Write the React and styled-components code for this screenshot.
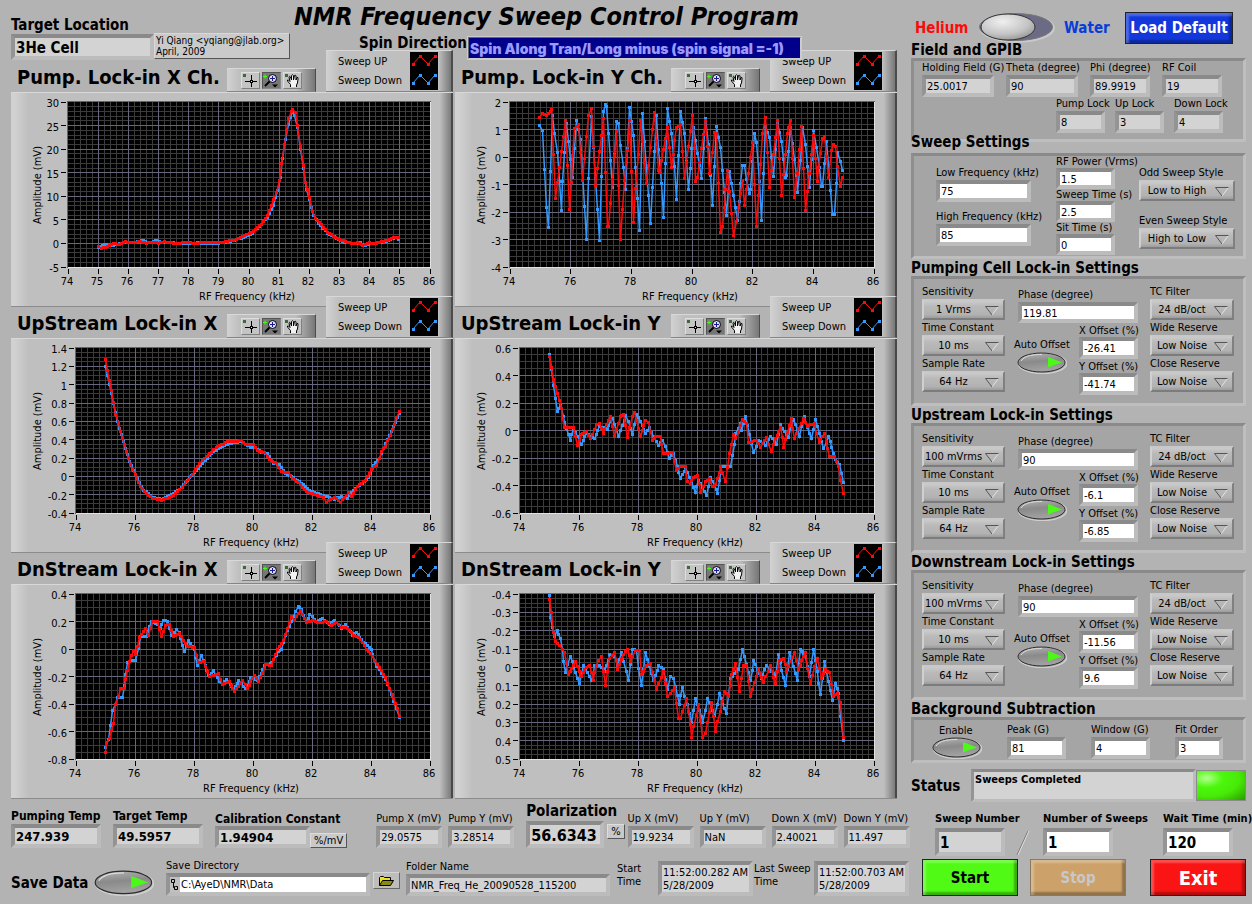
import { useId, useState } from "react";
import styled, { createGlobalStyle } from "styled-components";

const GlobalStyle = createGlobalStyle`
  * {
    box-sizing: border-box;
  }

  body {
    margin: 0;
    background: #b3b3b3;
    color: #000;
    font-family: "DejaVu Sans Condensed", "DejaVu Sans", sans-serif;
    font-size: 11px;
    line-height: 14px;
  }

  input,
  select,
  button,
  textarea {
    font: inherit;
    color: inherit;
    border-radius: 0;
    margin: 0;
  }
`;

// ========== PAGE ==========
const Page = styled.div`
  display: flex;
  min-height: 100vh;
  background: #b3b3b3;
  overflow: hidden;
`;

const Main = styled.main`
  flex: 1;
  min-width: 0;
  padding-left: 11px;
`;

const Sidebar = styled.aside`
  flex: 0 0 341px;
  padding-right: 6px;
`;

// ========== HEADER ==========
const Header = styled.header`
  position: relative;
  z-index: 2;
  display: flex;
  height: 61px;
`;

const Target = styled.div`
  width: 143px;
  padding-top: 16px;
`;

const Note = styled.div`
  align-self: flex-start;
  margin-top: 33px;
  width: 136px;
  height: 26px;
  padding: 1px;
  font-size: 10px;
  line-height: 11px;
  white-space: nowrap;
  background: #cacaca;
  border: 1px solid;
  border-color: #d8d8d8 #555 #555 #d8d8d8;
`;

const TitleBlock = styled.div`
  flex: 1;
  min-width: 0;
  padding-left: 4px;
`;

const Title = styled.h1`
  margin: 0;
  padding-top: 2px;
  font-size: 25px;
  line-height: 30px;
  font-weight: bold;
  font-style: italic;
  white-space: nowrap;
`;

const SpinRow = styled.div`
  display: flex;
  padding-left: 65px;
  margin-top: 4px;
`;

const SpinLabel = styled.label`
  width: 108px;
  font-size: 15px;
  line-height: 14px;
  font-weight: bold;
  white-space: nowrap;
`;

const SpinInput = styled.input`
  width: 335px;
  height: 24px;
  padding: 0 1px;
  font-family: Inter, "DejaVu Sans", sans-serif;
  font-size: 14px;
  font-weight: 900;
  color: #9a9aff;
  background: #00008a;
  border: 2px solid;
  border-color: #666 #ccc #ccc #666;
  outline: 1px solid #ccc;
  outline-offset: -1px;
`;

// ========== FIELDS ==========
const Text = styled.label`
  display: block;
  font-size: ${({ $size }) => $size || 11}px;
  line-height: ${({ $line }) => $line || 14}px;
  font-weight: ${({ $bold }) => ($bold ? "bold" : "normal")};
  white-space: nowrap;
`;

const Box = styled.input`
  display: block;
  width: 100%;
  height: ${({ $h }) => $h || 22}px;
  padding: 1px 1px 0;
  font-size: ${({ $size }) => $size || 11}px;
  font-weight: ${({ $bold }) => ($bold ? "bold" : "normal")};
  background: ${({ readOnly }) => (readOnly ? "#d3d3d3" : "#fff")};
  border: 4px solid;
  border-color: #8a8a8a #bcbcbc #bcbcbc #949494;
  outline: none;
`;

const FieldWrap = styled.div`
  width: ${({ $w }) => $w}px;
  flex: none;
`;

function Field({ label, value, w, h, size, labelSize, line, bold, indicator }) {
  const id = useId();
  return (
    <FieldWrap $w={w}>
      <Text htmlFor={id} $size={labelSize} $line={line} $bold={bold}>
        {label}
      </Text>
      <Box
        id={id}
        $h={h}
        $size={size}
        $bold={bold}
        defaultValue={value}
        readOnly={indicator}
      />
    </FieldWrap>
  );
}

const Unit = styled.span`
  flex: none;
  height: 15px;
  margin-bottom: ${({ $mb }) => $mb || 0}px;
  padding: 0 3px;
  font-size: 11px;
  line-height: 13px;
  background: #c9c9c9;
  border: 1px solid;
  border-color: #ddd #555 #555 #ddd;
`;

const RingWrap = styled.div`
  position: relative;
  width: ${({ $w }) => $w}px;

  svg {
    position: absolute;
    right: 6px;
    top: 7px;
    pointer-events: none;
  }
`;

const RingSelect = styled.select`
  display: block;
  appearance: none;
  width: 100%;
  height: 21px;
  padding: 0 20px 0 0;
  text-align: center;
  text-align-last: center;
  background: linear-gradient(180deg, #cbcbcb, #bababa 30%, #b2b2b2 80%, #9c9c9c);
  border: 2px solid;
  border-color: #c8c8c8 #808080 #7c7c7c #d0d0d0;
  outline: none;
`;

function Ring({ label, value, w }) {
  const id = useId();
  return (
    <div>
      <Text htmlFor={id} $line={15}>
        {label}
      </Text>
      <RingWrap $w={w}>
        <RingSelect id={id} defaultValue={value}>
          <option>{value}</option>
        </RingSelect>
        <svg width="14" height="10" viewBox="0 0 14 10" fill="none">
          <path d="M13.5 .5L7 9" stroke="#e4e4e4" />
          <path d="M13.5 .5H.5L7 9" stroke="#555" />
        </svg>
      </RingWrap>
    </div>
  );
}

// ========== LED BUTTON ==========
const LedButton = styled.button`
  display: block;
  flex: none;
  padding: 0;
  border: 0;
  background: none;
  cursor: pointer;

  svg {
    display: block;
  }
`;

function Led({ id, label, w = 50, h = 22 }) {
  const [on, setOn] = useState(true);
  const g = useId();
  return (
    <LedButton
      id={id}
      type="button"
      aria-label={label}
      aria-pressed={on}
      onClick={() => setOn(!on)}
    >
      <svg width={w} height={h} viewBox="0 0 50 22" preserveAspectRatio="none">
        <defs>
          <linearGradient id={g} x1="0" y1="0" x2="0.2" y2="1">
            <stop offset="0" stopColor="#b4b4b4" />
            <stop offset="0.5" stopColor="#8a8a8a" />
            <stop offset="1" stopColor="#a2a2a2" />
          </linearGradient>
        </defs>
        <ellipse cx="25.5" cy="11.5" rx="24" ry="10" fill="none" stroke="#cfcfcf" strokeWidth="1.5" />
        <ellipse cx="24.5" cy="10.5" rx="23.5" ry="9.5" fill={`url(#${g})`} stroke="#2c2c2c" />
        <path d="M4 9C8 3 18 2.500 25 2.500" fill="none" stroke="#dcdcdc" />
        <path d="M31 5Q37 7 45 10.500Q37 13 31 15.500Z" fill={on ? "#4cf818" : "#4a6a40"} />
      </svg>
    </LedButton>
  );
}

// ========== CHARTS ==========
const Charts = styled.section`
  display: grid;
  grid-template-columns: 1fr 1fr;
  column-gap: 2px;
  padding-right: 14px;
`;

const Card = styled.article`
  min-width: 0;
`;

const CardHead = styled.div`
  position: relative;
  display: flex;
  align-items: flex-end;
  height: 31px;
  padding-left: 6px;
`;

const CardTitle = styled.h2`
  flex: 0 0 210px;
  margin: 0;
  font-size: 20px;
  line-height: 29px;
  font-weight: bold;
  white-space: nowrap;
`;

const Palette = styled.div`
  display: flex;
  gap: 2px;
  width: 89px;
  height: 24px;
  padding: 3px 14px;
  background: linear-gradient(90deg, #d2d2d2, #bfbfbf 14%, #bdbdbd 78%, #777);
  border-top: 1px solid #d8d8d8;
  border-right: 1px solid #4c4c4c;
  border-bottom: 1px solid #858585;
`;

const PaletteButton = styled.button`
  width: 19px;
  height: 17px;
  padding: 0;
  background: ${({ $on }) => ($on ? "#777" : "#c4c4c4")};
  border: 1px solid;
  border-color: ${({ $on }) =>
    $on ? "#555 #888 #888 #555" : "#dedede #808080 #808080 #dedede"};

  svg {
    display: block;
  }
`;

const Legend = styled.ul`
  position: relative;
  display: flex;
  flex-direction: column;
  justify-content: center;
  width: 127px;
  height: 42px;
  margin: 0 0 0 auto;
  padding: 0 0 0 12px;
  list-style: none;
  background: linear-gradient(90deg, #d2d2d2, #bfbfbf 10%, #bfbfbf 90%, #777);
  border-top: 1px solid #d8d8d8;
  border-right: 2px solid #4c4c4c;
  border-bottom: 1px solid #858585;
`;

const LegendItem = styled.li`
  display: flex;
  align-items: center;
  justify-content: space-between;
  height: 19px;
  padding-right: 13px;

  svg {
    display: block;
    background: #000;
  }
`;

const Plot = styled.svg`
  display: block;
  width: 100%;
  height: auto;
  background: linear-gradient(90deg, #d2d2d2 0, #d0d0d0 1%, #bfbfbf 4%, #bfbfbf 97%, #6e6e6e);
  box-shadow: inset 0 1px #d8d8d8, inset 0 -1px #8c8c8c, inset -2px 0 #484848;

  text {
    font-size: 11px;
  }
`;

const RED = "#ff0a0a";
const BLUE = "#3399ff";

// fills the gaps between two readings at the instrument step
function sample(pts) {
  const out = [];
  for (let i = 0; i < pts.length - 2; i += 2) {
    const [x0, y0, x1, y1] = pts.slice(i, i + 4);
    const n = Math.max(1, Math.round((x1 - x0) / 0.067));
    for (let k = 0; k < n; k++) {
      out.push([x0 + ((x1 - x0) * k) / n, y0 + ((y1 - y0) * k) / n]);
    }
  }
  out.push([pts[pts.length - 2], pts[pts.length - 1]]);
  return out;
}

function Trace({ pts, color, sx, sy }) {
  const p = sample(pts).map(([x, y]) => [Math.floor(sx(x)), Math.floor(sy(y))]);
  return (
    <g>
      <polyline
        points={p.map(([x, y]) => `${x + 0.5},${y + 0.5}`).join(" ")}
        fill="none"
        stroke={color}
        strokeWidth="1.5"
      />
      <path
        d={p.map(([x, y]) => `M${x - 1} ${y - 1}h3v3h-3z`).join("")}
        fill={color}
        shapeRendering="crispEdges"
      />
    </g>
  );
}

function range(a, b, step) {
  const out = [];
  const n = Math.round((b - a) / step);
  for (let i = 0; i <= n; i++) out.push(a + i * step);
  return out;
}

function Graph({ chart }) {
  const { left, right = 419, xStep, top, bottom, step, minor, up, down } = chart;
  const sx = (v) => left + ((v - 74) / 12) * (right - left);
  const sy = (v) => 10 + ((v - top) / (bottom - top)) * 165;
  const lineX = (v) => Math.floor(sx(v)) + 0.5;
  const lineY = (v) => Math.floor(sy(v)) + 0.5;
  const dir = bottom > top ? 1 : -1;
  const xs = range(74, 86, xStep);
  const ys = range(top, bottom, dir * step);
  const hLine = (v) => `M${left} ${lineY(v)}H${right}`;
  const vLine = (v) => `M${lineX(v)} 10V175`;
  return (
    <Plot viewBox="0 0 442 215" role="img" aria-label={chart.title}>
      <rect x={left - 1} y="9" width={right - left + 2} height="167" fill="#e2e2e2" />
      <path d={`M${left - 1} 176V9H${right + 1}V10H${left}V176Z`} fill="#666" />
      <rect x={left} y="10" width={right - left} height="165" fill="#000" />
      <g fill="none" shapeRendering="crispEdges">
        <path
          d={
            range(74.2, 85.8, 0.2).map(vLine).join("") +
            range(top, bottom, (dir * step) / minor).slice(1, -1).map(hLine).join("")
          }
          stroke="#3b3b3b"
        />
        <path
          d={xs.slice(1, -1).map(vLine).join("") + ys.slice(1, -1).map(hLine).join("")}
          stroke="#66667c"
        />
        <path
          d={
            ys.map((v) => `M${left - 7} ${lineY(v)}h5`).join("") +
            xs.map((v) => `M${lineX(v)} 177v5`).join("")
          }
          stroke="#000"
        />
      </g>
      {ys.map((v) => (
        <text key={v} x={left - 9} y={Math.round(sy(v)) + 5} textAnchor="end">
          {Number(v.toFixed(2))}
        </text>
      ))}
      {xs.map((v) => (
        <text key={v} x={Math.round(sx(v)) - 1} y="193" textAnchor="middle">
          {v}
        </text>
      ))}
      <text x={(left + right) / 2 - 2} y="208" textAnchor="middle">
        RF Frequency (kHz)
      </text>
      <text transform="translate(30 93) rotate(-90)" textAnchor="middle">
        Amplitude (mV)
      </text>
      <Trace pts={down} color={BLUE} sx={sx} sy={sy} />
      <Trace pts={up} color={RED} sx={sx} sy={sy} />
    </Plot>
  );
}

// readings are flat [kHz, mV, kHz, mV, ...] lists
const charts = [
  {
    title: "Pump. Lock-in X Ch.",
    left: 57,
    xStep: 1,
    top: 30,
    bottom: -5,
    step: 5,
    minor: 5,
    up: [75, -0.7, 75.1, -1, 75.3, -0.7, 75.5, 0, 75.7, -0.2, 75.9, 0.4, 76.1, 0.1, 76.4, 0.4, 76.6, 0, 76.8, 0.3, 77, 0, 77.2, 0.4, 77.5, 0, 77.8, 0.1, 78, 0.2, 78.2, -0.1, 78.4, 0.1, 78.8, 0.1, 79, 0.1, 79.3, 0.5, 79.5, 0.7, 79.8, 1.4, 80, 2.1, 80.2, 2.9, 80.4, 4.1, 80.6, 5.9, 80.75, 8, 80.9, 10.8, 81, 13.3, 81.08, 17, 81.17, 21, 81.25, 24, 81.32, 26.5, 81.4, 28, 81.45, 28.5, 81.53, 27.7, 81.6, 25, 81.7, 20.5, 81.8, 16.5, 81.87, 13, 82, 9.8, 82.1, 6.8, 82.2, 5.3, 82.4, 4, 82.6, 2.4, 82.8, 1.5, 83, 0.8, 83.2, 0.5, 83.4, -0.1, 83.6, 0.1, 83.77, -0.5, 84, 0.2, 84.15, -0.1, 84.4, 0.4, 84.6, 0.6, 84.8, 1.2, 84.95, 1.3],
    down: [75, -0.8, 75.2, -0.3, 75.5, -0.4, 75.7, 0, 75.95, 0.2, 76.1, 0.1, 76.3, 0.4, 76.5, 0.7, 76.7, 0.1, 76.95, 0.7, 77.1, 0.1, 77.5, 0.1, 78, -0.1, 78.3, 0.1, 78.6, -0.1, 79, 0, 79.3, 0.4, 79.6, 0.8, 79.9, 1.5, 80.1, 2.2, 80.35, 3.5, 80.6, 5.6, 80.8, 8, 80.95, 11.3, 81.03, 14, 81.12, 18, 81.2, 22, 81.3, 25.3, 81.43, 28, 81.5, 27.2, 81.6, 24.5, 81.7, 20, 81.8, 15.8, 81.9, 11.5, 82, 9.3, 82.15, 6, 82.3, 4.3, 82.6, 2.2, 82.9, 1.1, 83.1, 0.4, 83.4, 0, 83.7, 0.1, 83.85, -0.4, 84.1, 0, 84.4, 0.2, 84.7, 0.8, 84.85, 1.3, 84.95, 0.8],
  },
  {
    title: "Pump. Lock-in Y Ch.",
    left: 55,
    xStep: 2,
    top: 2,
    bottom: -4,
    step: 1,
    minor: 5,
    up: [74.98, 1.43, 75.07, 1.57, 75.2, 1.5, 75.38, 1.71, 75.49, -1.5, 75.82, 1.32, 75.96, -1.91, 76.13, 1.02, 76.25, 1.18, 76.39, -0.84, 76.59, 1.52, 76.68, 1.76, 76.82, -1.02, 77.07, 1.39, 77.2, -2.54, 77.24, -2.54, 77.52, 0.91, 77.65, -3, 77.93, 1.32, 78.08, -2.38, 78.3, 1.34, 78.51, -0.95, 78.76, 1.63, 78.89, -0.49, 78.94, -0.55, 79.19, 1.09, 79.32, -0.37, 79.49, 1.06, 79.62, 1.18, 79.75, -0.77, 80.02, 1.5, 80.13, -0.89, 80.18, -0.73, 80.46, 1.32, 80.59, -0.59, 80.75, 0.89, 80.81, 0.84, 80.94, -2.74, 81, -2.54, 81.17, -0.48, 81.38, -2.85, 81.67, -0.84, 81.74, -1.76, 82, 0.54, 82.14, -2.54, 82.34, 0.84, 82.43, 1.43, 82.56, -1.11, 82.83, 1.32, 82.94, -1.4, 83.14, 0.84, 83.25, 1.32, 83.39, -1.46, 83.62, 1.12, 83.75, -1.94, 84.02, 0.77, 84.13, -0.89, 84.3, 0.66, 84.37, 0.76, 84.51, -0.73, 84.6, 0.25, 84.68, 0.45, 84.74, 0.39, 84.88, -1.07, 84.95, -0.74],
    down: [74.98, 1.13, 75.06, 0.95, 75.2, -1.83, 75.26, -2.56, 75.41, 1.51, 75.55, 0.17, 75.69, -1.95, 75.86, 1.22, 76.06, -0.73, 76.19, 1.32, 76.33, 0.65, 76.52, -3, 76.68, 1.46, 76.94, -3.04, 77.08, 1.65, 77.14, 1.9, 77.18, 1.83, 77.37, -1.1, 77.52, 1.28, 77.58, 1.22, 77.8, -1.17, 77.94, 1.79, 78.07, 0.77, 78.26, -2.67, 78.36, 1.57, 78.63, -2.41, 78.83, 1.5, 79.06, -2.2, 79.19, 1.76, 79.33, 0.84, 79.49, -1.54, 79.63, 1.65, 79.75, 0.84, 79.88, -1.17, 80.05, 1.06, 80.31, -0.77, 80.45, 1.39, 80.55, 0.44, 80.68, -1.77, 80.81, 1.1, 80.94, 0.33, 81.14, -2.12, 81.24, -0.51, 81.5, -2.3, 81.67, -0.3, 81.72, -0.3, 81.88, -1.32, 81.93, -1.17, 82.07, 0.84, 82.14, 0.54, 82.3, -2.3, 82.43, 1.1, 82.56, 0.71, 82.69, -0.71, 82.83, 1.24, 82.94, 0.57, 83.07, -0.73, 83.12, -0.66, 83.25, 1.09, 83.49, -1.28, 83.65, 1.06, 83.75, 0.44, 83.88, -1.1, 84.02, 0.95, 84.12, 0.33, 84.26, -1.06, 84.31, -1.06, 84.44, 0.57, 84.62, -2.09, 84.69, -2.09, 84.81, 0.15, 84.95, -0.49],
  },
  {
    title: "UpStream Lock-in X",
    left: 65,
    xStep: 2,
    top: 1.4,
    bottom: -0.4,
    step: 0.2,
    minor: 4,
    up: [75, 1.27, 75.2, 0.94, 75.35, 0.68, 75.5, 0.49, 75.7, 0.27, 75.85, 0.13, 76, 0.02, 76.2, -0.11, 76.4, -0.19, 76.6, -0.24, 76.9, -0.26, 77.1, -0.24, 77.3, -0.21, 77.6, -0.12, 77.8, -0.03, 78, 0.05, 78.2, 0.14, 78.35, 0.2, 78.6, 0.26, 78.75, 0.32, 79, 0.35, 79.15, 0.38, 79.4, 0.38, 79.6, 0.39, 79.75, 0.35, 80, 0.35, 80.15, 0.28, 80.4, 0.26, 80.55, 0.18, 80.8, 0.14, 80.95, 0.05, 81.2, 0.04, 81.35, -0.02, 81.6, -0.09, 81.8, -0.17, 82.1, -0.2, 82.4, -0.23, 82.5, -0.28, 82.75, -0.23, 82.95, -0.28, 83.25, -0.18, 83.33, -0.22, 83.55, -0.11, 83.8, -0.04, 84, 0.07, 84.2, 0.12, 84.35, 0.27, 84.5, 0.33, 84.65, 0.45, 84.8, 0.57, 84.95, 0.71],
    down: [75, 1.2, 75.2, 0.9, 75.4, 0.6, 75.6, 0.38, 75.8, 0.16, 76, 0.02, 76.3, -0.15, 76.6, -0.23, 76.9, -0.25, 77.25, -0.2, 77.5, -0.14, 77.7, -0.07, 78, 0.04, 78.3, 0.14, 78.6, 0.25, 78.9, 0.32, 79.2, 0.36, 79.6, 0.38, 79.9, 0.32, 80.1, 0.31, 80.3, 0.26, 80.5, 0.25, 80.7, 0.14, 80.9, 0.13, 81.1, 0.03, 81.3, 0, 81.7, -0.09, 82, -0.17, 82.3, -0.2, 82.6, -0.23, 82.75, -0.25, 83, -0.22, 83.2, -0.24, 83.4, -0.15, 83.7, -0.08, 83.9, -0.01, 84.1, 0.12, 84.3, 0.2, 84.5, 0.36, 84.7, 0.49, 84.95, 0.69],
  },
  {
    title: "UpStream Lock-in Y",
    left: 65,
    xStep: 2,
    top: 0.6,
    bottom: -0.6,
    step: 0.2,
    minor: 4,
    up: [74.99, 0.54, 75.12, 0.37, 75.26, 0.27, 75.39, 0.16, 75.51, 0.02, 75.8, 0.02, 75.95, -0.11, 76.07, -0.03, 76.25, -0.01, 76.38, -0.06, 76.59, 0.04, 76.69, 0.05, 76.82, -0.02, 77.06, 0.1, 77.22, -0.04, 77.39, 0.1, 77.51, 0.12, 77.65, -0.05, 77.8, 0.1, 77.89, 0.13, 78.08, -0.04, 78.25, 0.07, 78.35, 0.06, 78.49, -0.07, 78.61, -0.04, 78.75, -0.04, 78.86, -0.17, 79.17, -0.16, 79.31, -0.29, 79.43, -0.26, 79.6, -0.26, 79.69, -0.37, 79.77, -0.39, 79.88, -0.34, 80.02, -0.33, 80.13, -0.45, 80.28, -0.37, 80.41, -0.35, 80.53, -0.41, 80.64, -0.39, 80.81, -0.26, 80.95, -0.37, 81.1, -0.17, 81.24, -0.03, 81.32, -0.06, 81.55, 0.08, 81.67, 0.05, 81.76, -0.09, 82.01, -0.07, 82.15, -0.12, 82.37, -0.05, 82.51, -0.15, 82.66, -0.06, 82.83, 0.02, 82.94, -0.12, 83.19, 0.09, 83.31, -0.06, 83.6, 0.09, 83.73, 0.03, 83.98, 0.05, 84.14, -0.09, 84.32, -0.02, 84.49, -0.19, 84.66, -0.19, 84.81, -0.26, 84.95, -0.46],
    down: [74.99, 0.55, 75.12, 0.33, 75.26, 0.14, 75.37, 0.18, 75.46, 0.1, 75.7, -0.07, 75.82, 0.01, 76.08, -0.1, 76.25, -0.02, 76.52, -0.06, 76.69, 0.03, 76.96, 0.01, 77.13, 0.09, 77.35, -0.04, 77.59, 0.11, 77.81, -0.03, 77.95, 0.12, 78.26, -0.02, 78.39, 0.02, 78.69, -0.11, 78.84, -0.07, 79.07, -0.2, 79.2, -0.17, 79.45, -0.35, 79.62, -0.27, 79.94, -0.45, 80.05, -0.36, 80.32, -0.47, 80.45, -0.34, 80.71, -0.46, 80.84, -0.26, 80.96, -0.26, 81.13, -0.26, 81.32, -0.02, 81.47, 0.05, 81.52, 0, 81.63, 0.1, 81.93, -0.16, 82.09, -0.07, 82.32, -0.11, 82.49, -0.04, 82.71, -0.1, 82.83, 0.04, 83.1, -0.05, 83.26, 0.08, 83.48, -0.04, 83.63, 0.1, 83.87, -0.06, 84.01, 0.08, 84.3, -0.13, 84.45, -0.04, 84.7, -0.21, 84.83, -0.25, 84.95, -0.38],
  },
  {
    title: "DnStream Lock-in X",
    left: 65,
    xStep: 2,
    top: 0.4,
    bottom: -0.8,
    step: 0.2,
    minor: 4,
    up: [75, -0.75, 75.05, -0.68, 75.14, -0.65, 75.26, -0.54, 75.35, -0.4, 75.51, -0.29, 75.63, -0.29, 75.8, -0.09, 75.95, -0.01, 76.02, -0.04, 76.16, 0.08, 76.36, 0.15, 76.46, 0.1, 76.58, 0.2, 76.75, 0.2, 76.89, 0.09, 77.04, 0.17, 77.18, 0.18, 77.3, 0.09, 77.52, 0.11, 77.77, 0.02, 78.01, 0.01, 78.15, -0.1, 78.34, -0.09, 78.54, -0.2, 78.83, -0.18, 78.97, -0.26, 79.2, -0.24, 79.37, -0.31, 79.65, -0.23, 79.81, -0.29, 80.05, -0.19, 80.2, -0.24, 80.44, -0.11, 80.64, -0.12, 80.84, 0, 81.04, 0.06, 81.3, 0.24, 81.4, 0.21, 81.6, 0.28, 81.83, 0.19, 82, 0.21, 82.25, 0.19, 82.49, 0.2, 82.65, 0.17, 82.83, 0.19, 82.99, 0.16, 83.22, 0.15, 83.42, 0.1, 83.64, 0.07, 83.85, 0, 83.98, -0.03, 84.21, -0.11, 84.49, -0.21, 84.72, -0.33, 84.89, -0.43, 84.95, -0.49],
    down: [75, -0.72, 75.1, -0.66, 75.25, -0.45, 75.4, -0.35, 75.57, -0.35, 75.75, -0.1, 75.9, -0.08, 76.03, -0.08, 76.18, 0.09, 76.38, 0.09, 76.55, 0.2, 76.75, 0.18, 76.85, 0.15, 76.98, 0.21, 77.1, 0.2, 77.25, 0.1, 77.4, 0.14, 77.5, 0.12, 77.67, -0.02, 77.82, 0.06, 78, 0, 78.12, -0.12, 78.26, -0.05, 78.5, -0.19, 78.66, -0.16, 78.95, -0.26, 79.1, -0.22, 79.35, -0.29, 79.52, -0.23, 79.75, -0.29, 79.93, -0.21, 80.15, -0.23, 80.4, -0.12, 80.64, -0.1, 80.85, -0.02, 80.97, 0, 81.1, 0.1, 81.3, 0.2, 81.53, 0.31, 81.64, 0.29, 81.8, 0.2, 81.93, 0.25, 82.15, 0.2, 82.35, 0.22, 82.6, 0.18, 82.77, 0.21, 83, 0.15, 83.14, 0.18, 83.37, 0.1, 83.5, 0.12, 83.75, 0.05, 84, 0, 84.2, -0.13, 84.5, -0.22, 84.7, -0.33, 84.85, -0.43, 84.95, -0.5],
  },
  {
    title: "DnStream Lock-in Y",
    left: 65,
    xStep: 2,
    top: -0.4,
    bottom: 0.5,
    step: 0.1,
    minor: 4,
    up: [74.99, -0.37, 75.07, -0.3, 75.12, -0.19, 75.2, -0.14, 75.35, -0.12, 75.5, -0.08, 75.63, 0.04, 75.89, -0.03, 76.08, 0.05, 76.2, 0.01, 76.37, -0.01, 76.48, 0.07, 76.59, -0.01, 76.75, -0.06, 76.9, 0.1, 77.05, -0.05, 77.2, -0.08, 77.31, 0.01, 77.5, -0.07, 77.64, -0.1, 77.75, -0.03, 77.9, -0.09, 78.05, -0.09, 78.12, 0.04, 78.29, -0.01, 78.44, -0.02, 78.63, 0.12, 78.86, 0.02, 79.01, 0.16, 79.24, 0.11, 79.37, 0.28, 79.44, 0.28, 79.65, 0.17, 79.82, 0.38, 80.05, 0.2, 80.2, 0.38, 80.28, 0.36, 80.5, 0.19, 80.64, 0.35, 80.92, 0.13, 81.07, 0.16, 81.18, 0.04, 81.32, -0.02, 81.44, 0.13, 81.58, -0.01, 81.67, -0.01, 81.83, 0.16, 82.09, 0.01, 82.26, 0.08, 82.49, -0.01, 82.66, 0.09, 82.79, -0.04, 82.94, -0.05, 83.05, 0.02, 83.31, -0.08, 83.43, 0.01, 83.68, -0.08, 83.84, 0.09, 84.07, -0.05, 84.21, 0.06, 84.36, 0.01, 84.49, 0.03, 84.63, 0.16, 84.75, 0.14, 84.87, 0.19, 84.95, 0.38],
    down: [74.99, -0.39, 75.05, -0.27, 75.18, -0.17, 75.26, -0.2, 75.37, -0.16, 75.55, 0.03, 75.7, -0.06, 76.02, 0.09, 76.15, -0.01, 76.42, 0.07, 76.54, -0.01, 76.69, -0.01, 76.88, 0.02, 77.05, -0.07, 77.2, -0.06, 77.31, -0.01, 77.44, -0.08, 77.67, 0.07, 77.82, -0.1, 77.95, -0.09, 78.11, 0.1, 78.26, -0.08, 78.54, 0.07, 78.71, -0.01, 78.86, 0.01, 79.01, 0.12, 79.11, 0.05, 79.2, 0.06, 79.39, 0.2, 79.52, 0.11, 79.81, 0.3, 79.96, 0.17, 80.2, 0.3, 80.35, 0.17, 80.6, 0.26, 80.76, 0.14, 81, 0.25, 81.13, 0.06, 81.41, 0.01, 81.55, -0.1, 81.8, 0.07, 81.93, -0.04, 82.17, 0.06, 82.37, -0.01, 82.66, 0.05, 82.75, -0.07, 83.01, 0.1, 83.14, -0.08, 83.39, 0.07, 83.51, -0.1, 83.68, -0.06, 83.81, 0.05, 83.94, -0.1, 84.2, 0.15, 84.31, -0.03, 84.61, 0.18, 84.69, 0.09, 84.81, 0.14, 84.95, 0.4],
  },
];

function LegendMark({ color }) {
  return (
    <svg width="28" height="19" viewBox="0 0 28 19">
      <path d="M3 12L10 4L18 12L25 4" fill="none" stroke={color} />
      <path
        d="M2 11h3v3h-3zM9 3h3v3h-3zM17 11h3v3h-3zM24 3h3v3h-3z"
        fill={color}
        shapeRendering="crispEdges"
      />
    </svg>
  );
}

function ChartCard({ chart }) {
  return (
    <Card>
      <CardHead>
        <CardTitle>{chart.title}</CardTitle>
        <Palette>
          <PaletteButton type="button" aria-label="Cursor">
            <svg width="17" height="15" viewBox="0 0 17 15">
              <rect x="1" y="1" width="3" height="3" fill="#3f663f" />
              <path d="M3 8.500H15M9.500 2V14" stroke="#000" shapeRendering="crispEdges" />
              <rect x="8" y="7" width="3" height="3" fill="#000" />
              <rect x="9" y="8" width="1" height="1" fill="#ddd" />
            </svg>
          </PaletteButton>
          <PaletteButton type="button" aria-label="Zoom" $on>
            <svg width="17" height="15" viewBox="0 0 17 15">
              <path d="M0 3.500H4M2 1.500V5.500" stroke="#4cf818" />
              <circle cx="9.500" cy="5.500" r="4" fill="#dcdcf4" stroke="#000" />
              <path d="M7 5.500H12M9.500 3V8" stroke="#1a1a8a" />
              <path d="M6.500 8.500L2 13" stroke="#000" strokeWidth="2" />
              <path d="M9 11.500H15L12 14.500Z" fill="#000" />
            </svg>
          </PaletteButton>
          <PaletteButton type="button" aria-label="Pan">
            <svg width="17" height="15" viewBox="0 0 17 15">
              <rect x="1" y="1" width="3" height="3" fill="#3f663f" />
              <path
                d="M6.500 14V11.500L3.500 8Q3 6.500 4.500 7L6 8.500L5 4Q5.500 2.500 6.500 4L7.500 7V2.500Q8.500 1 9.500 2.500V7L10.500 2.500Q11.500 1.500 12 3V7L13 4.500Q14.500 4 14 6L13.500 10L12.500 12V14"
                fill="#f2f2f2"
                stroke="#000"
              />
            </svg>
          </PaletteButton>
        </Palette>
        <Legend>
          <LegendItem>
            Sweep UP <LegendMark color={RED} />
          </LegendItem>
          <LegendItem>
            Sweep Down <LegendMark color={BLUE} />
          </LegendItem>
        </Legend>
      </CardHead>
      <Graph chart={chart} />
    </Card>
  );
}

// ========== READOUTS (below the charts) ==========
const Readouts = styled.section`
  display: flex;
  align-items: flex-end;
  height: 49px;
`;

const Gap = styled.div`
  flex: none;
  display: flex;
  align-items: flex-end;
  gap: 6px;
  margin-left: ${({ $ml }) => $ml || 0}px;
`;

const WithUnit = styled.div`
  display: flex;
  align-items: flex-end;
  gap: ${({ $gap }) => $gap || 0}px;
`;

const SaveRow = styled.section`
  display: flex;
  align-items: flex-end;
  height: 48px;
`;

const SaveLabel = styled.label`
  width: 83px;
  font-size: 15px;
  line-height: 26px;
  font-weight: bold;
  white-space: nowrap;
`;

const PathBox = styled.div`
  display: flex;
  align-items: center;
  gap: 2px;
  width: 204px;
  height: 23px;
  border: 4px solid;
  border-color: #8a8a8a #bcbcbc #bcbcbc #949494;
  background: #c0c0c0;

  svg {
    flex: none;
  }

  input {
    flex: 1;
    min-width: 0;
    height: 100%;
    padding: 0 1px;
    border: 0;
    background: #fff;
    outline: none;
  }
`;

const FolderButton = styled.button`
  width: 27px;
  height: 17px;
  margin: 0 6px 7px 3px;
  padding: 0;
  background: #bdbdbd;
  border: 1px solid;
  border-color: #d4d4d4 #666 #666 #d4d4d4;

  svg {
    display: block;
    margin: 0 auto;
  }
`;

const TimeLabel = styled.label`
  flex: none;
  width: ${({ $w }) => $w}px;
  padding: 0 0 8px 1px;
  line-height: 13px;
  white-space: nowrap;
`;

const TimeBox = styled.textarea`
  display: block;
  flex: none;
  width: 95px;
  height: 35px;
  padding: 1px;
  line-height: 13px;
  white-space: pre;
  overflow: hidden;
  resize: none;
  background: #d3d3d3;
  border: 4px solid;
  border-color: #8a8a8a #bcbcbc #bcbcbc #949494;
  outline: none;
`;

// ========== SIDEBAR ==========
const ModeRow = styled.div`
  display: flex;
  align-items: center;
  height: 41px;
  padding: 14px 12px 0 4px;
`;

const ModeText = styled.span`
  width: ${({ $w }) => $w}px;
  font-size: 15px;
  line-height: 18px;
  font-weight: bold;
  color: ${({ $color }) => $color};
`;

const SwitchButton = styled.button`
  width: 78px;
  height: 34px;
  margin-right: 8px;
  padding: 0;
  border: 0;
  background: none;

  svg {
    display: block;
  }
`;

const PushButton = styled.button`
  flex: none;
  width: ${({ $w }) => $w || 96}px;
  height: ${({ $h }) => $h || 37}px;
  padding: 0;
  font-size: ${({ $size }) => $size || 15}px;
  font-weight: bold;
  white-space: nowrap;
  color: ${({ $fg }) => $fg};
  background: ${({ $bg }) => $bg};
  border: 1px solid ${({ $edge }) => $edge || "#222"};
  box-shadow: inset 3px 3px 2px rgba(255, 255, 255, 0.25),
    inset -3px -3px 2px rgba(0, 0, 0, 0.3);
`;

const SectionTitle = styled.h3`
  position: relative;
  height: 17px;
  margin: ${({ $tuck }) => ($tuck ? "-9px 0 3px" : "0")};
  font-size: 15px;
  line-height: 19px;
  font-weight: bold;
  white-space: nowrap;
`;

const Panel = styled.section`
  display: flex;
  flex-direction: ${({ $column }) => ($column ? "column" : "row")};
  height: ${({ $h }) => $h}px;
  padding: ${({ $pad }) => $pad};
  background: #a5a5a5;
  border: 3px solid;
  border-color: #8a8a8a #bebebe #bebebe #8f8f8f;
`;

const Row = styled.div`
  display: flex;
  gap: ${({ $gap }) => $gap}px;
  padding-left: ${({ $pl }) => $pl || 0}px;
`;

const Col = styled.div`
  flex: none;
  display: flex;
  flex-direction: column;
  gap: ${({ $gap }) => $gap || 0}px;
  width: ${({ $w }) => $w}px;
  padding-top: ${({ $pt }) => $pt || 0}px;
`;

const OffsetRow = styled.div`
  display: flex;
  justify-content: space-between;
  margin-left: -4px;
  padding-top: 2px;
`;

const AutoOffset = styled.div`
  width: 65px;
  padding-top: 13px;
`;

const LedIndent = styled.div`
  padding-left: 3px;
`;

const EnableCol = styled.div`
  width: 75px;
  padding: 2px 0 0 0;

  label {
    padding-left: 7px;
    line-height: 12px;
  }
`;

function LockIn({ s }) {
  const id = useId();
  return (
    <>
      <SectionTitle>{s.title}</SectionTitle>
      <Panel $h={130} $pad="5px 0 0 8px">
        <Col $w={96}>
          <Ring label="Sensitivity" value={s.sens} w={83} />
          <Ring label="Time Constant" value="10 ms" w={83} />
          <Ring label="Sample Rate" value="64 Hz" w={83} />
        </Col>
        <Col $w={132} $pt={4}>
          <Field label="Phase (degree)" value={s.phase} w={120} h={21} />
          <OffsetRow>
            <AutoOffset>
              <Text htmlFor={id}>Auto Offset</Text>
              <LedIndent>
                <Led id={id} />
              </LedIndent>
            </AutoOffset>
            <Col $w={71} $gap={2}>
              <Field label="X Offset (%)" value={s.x} w={59} line={12} />
              <Field label="Y Offset (%)" value={s.y} w={59} line={12} />
            </Col>
          </OffsetRow>
        </Col>
        <Col $w={84}>
          <Ring label="TC Filter" value="24 dB/oct" w={84} />
          <Ring label="Wide Reserve" value="Low Noise" w={84} />
          <Ring label="Close Reserve" value="Low Noise" w={84} />
        </Col>
      </Panel>
    </>
  );
}

const StatusRow = styled.div`
  display: flex;
  align-items: center;
  margin-top: 6px;
  height: 33px;
`;

const StatusLabel = styled.label`
  width: 60px;
  font-size: 15px;
  font-weight: bold;
`;

const StatusBox = styled.textarea`
  flex: 1;
  min-width: 0;
  height: 33px;
  padding: 1px;
  line-height: 13px;
  font-weight: bold;
  background: #d3d3d3;
  border: 3px solid;
  border-color: #8a8a8a #bcbcbc #bcbcbc #949494;
  resize: none;
  outline: none;
`;

const StatusLight = styled.div`
  width: 50px;
  height: 31px;
  background: radial-gradient(ellipse at 20% 25%, #b4ff90 0, #4cf80c 30%, #48ea08 60%, #2a9c00 100%);
  border: 1px solid #8a8a8a;
`;

const CountRow = styled.div`
  display: flex;
  align-items: flex-end;
  height: 54px;
  padding-left: 24px;

  svg {
    flex: none;
    margin: 0 2px 0 8px;
  }
`;

const ButtonRow = styled.div`
  display: flex;
  gap: 12px;
  padding: 3px 0 0 11px;

  button:last-child {
    margin-left: auto;
  }
`;

const lockIns = [
  { title: "Pumping Cell Lock-in Settings", sens: "1 Vrms", phase: "119.81", x: "-26.41", y: "-41.74" },
  { title: "Upstream Lock-in Settings", sens: "100 mVrms", phase: "90", x: "-6.1", y: "-6.85" },
  { title: "Downstream Lock-in Settings", sens: "100 mVrms", phase: "90", x: "-11.56", y: "9.6" },
];

export default function App() {
  const [water, setWater] = useState(false);

  return (
    <>
      <GlobalStyle />
      <Page>
        <Main>
          {/* HEADER */}
          <Header>
            <Target>
              <Text htmlFor="target" $bold $size={15} $line={18}>
                Target Location
              </Text>
              <Box id="target" readOnly defaultValue="3He Cell" $bold $size={15} $h={26} />
            </Target>
            <Note>
              Yi Qiang &lt;yqiang@jlab.org&gt;
              <br />
              April, 2009
            </Note>
            <TitleBlock>
              <Title>NMR Frequency Sweep Control Program</Title>
              <SpinRow>
                <SpinLabel htmlFor="spin">Spin Direction</SpinLabel>
                <SpinInput
                  id="spin"
                  readOnly
                  defaultValue="Spin Along Tran/Long minus (spin signal =-1)"
                />
              </SpinRow>
            </TitleBlock>
          </Header>

          {/* CHARTS */}
          <Charts>
            {charts.map((c) => (
              <ChartCard key={c.title} chart={c} />
            ))}
          </Charts>

          {/* READOUTS */}
          <Readouts>
            <Field label="Pumping Temp" value="247.939" w={90} h={24} size={13} labelSize={12} line={16} bold indicator />
            <Gap $ml={12}>
              <Field label="Target Temp" value="49.5957" w={90} h={24} size={13} labelSize={12} line={16} bold indicator />
            </Gap>
            <Gap $ml={12}>
              <WithUnit>
                <Field label="Calibration Constant" value="1.94904" w={95} h={22} size={13} labelSize={12} line={14} bold indicator />
                <Unit>%/mV</Unit>
              </WithUnit>
            </Gap>
            <Gap $ml={29}>
              <Field label="Pump X (mV)" value="29.0575" w={66} indicator />
              <Field label="Pump Y (mV)" value="3.28514" w={66} indicator />
            </Gap>
            <Gap $ml={12}>
              <WithUnit $gap={3}>
                <Field label="Polarization" value="56.6343" w={78} h={27} size={16} labelSize={15} line={19} bold indicator />
                <Unit $mb={9}>%</Unit>
              </WithUnit>
            </Gap>
            <Gap $ml={3}>
              <Field label="Up X (mV)" value="19.9234" w={66} indicator />
              <Field label="Up Y (mV)" value="NaN" w={66} indicator />
              <Field label="Down X (mV)" value="2.40021" w={66} indicator />
              <Field label="Down Y (mV)" value="11.497" w={66} indicator />
            </Gap>
          </Readouts>

          <SaveRow>
            <SaveLabel htmlFor="save">Save Data</SaveLabel>
            <Led id="save" w={60} h={26} />
            <Gap $ml={12}>
              <div>
                <Text htmlFor="dir">Save Directory</Text>
                <PathBox>
                  <svg width="8" height="13" viewBox="0 0 8 13" fill="none">
                    <path d="M1.500 1.500H4.500V4.500H1.500ZM3.500 5V9.500H5M5.500 8.500H7.500V11.500H4.500V8.500Z" stroke="#000" />
                  </svg>
                  <input id="dir" defaultValue={"C:\\AyeD\\NMR\\Data"} />
                </PathBox>
              </div>
            </Gap>
            <FolderButton type="button" aria-label="Browse">
              <svg width="17" height="12" viewBox="0 0 17 12">
                <path d="M1.500 10.500V2.500L2.500 1.500H5.500L6.500 2.500H12.500V5" fill="#e8e020" stroke="#000" />
                <path d="M1.500 10.500L4.500 5.500H15.500L12.500 10.500Z" fill="#8a8a10" stroke="#000" />
              </svg>
            </FolderButton>
            <Field label="Folder Name" value="NMR_Freq_He_20090528_115200" w={204} indicator />
            <Gap $ml={6}>
              <TimeLabel htmlFor="start" $w={42}>
                Start
                <br />
                Time
              </TimeLabel>
            </Gap>
            <TimeBox id="start" readOnly defaultValue={"11:52:00.282 AM\n5/28/2009"} />
            <TimeLabel htmlFor="last" $w={61}>
              Last Sweep
              <br />
              Time
            </TimeLabel>
            <TimeBox id="last" readOnly defaultValue={"11:52:00.703 AM\n5/28/2009"} />
          </SaveRow>
        </Main>

        <Sidebar>
          {/* MODE */}
          <ModeRow>
            <ModeText $w={63} $color="#ff0a0a">
              Helium
            </ModeText>
            <SwitchButton
              type="button"
              role="switch"
              aria-label="Water"
              aria-checked={water}
              onClick={() => setWater(!water)}
            >
              <svg width="78" height="34" viewBox="0 0 78 34">
                <defs>
                  <radialGradient id="knob" cx="0.4" cy="0.3" r="0.8">
                    <stop offset="0" stopColor="#f0f0f0" />
                    <stop offset="0.6" stopColor="#c4c4c4" />
                    <stop offset="1" stopColor="#8c8c8c" />
                  </radialGradient>
                </defs>
                <ellipse cx="39" cy="17" rx="38" ry="15" fill="#c9c9c9" />
                <ellipse cx="38" cy="16" rx="36.500" ry="13.500" fill="#6b6b86" stroke="#777" />
                <ellipse cx={water ? 47 : 30} cy="16" rx="27" ry="13" fill="url(#knob)" stroke="#333" />
              </svg>
            </SwitchButton>
            <ModeText $w={61} $color="#0a3cd8">
              Water
            </ModeText>
            <PushButton type="button" $w={108} $h={32} $fg="#fff" $bg="#1238dc" $size={15}>
              Load Default
            </PushButton>
          </ModeRow>

          {/* FIELD AND GPIB */}
          <SectionTitle>Field and GPIB</SectionTitle>
          <Panel $h={84} $column $pad="0 0 0 8px">
            <Row $gap={12}>
              <Field label="Holding Field (G)" value="25.0017" w={72} indicator />
              <Field label="Theta (degree)" value="90" w={72} indicator />
              <Field label="Phi (degree)" value="89.9919" w={60} indicator />
              <Field label="RF Coil" value="19" w={60} indicator />
            </Row>
            <Row $gap={10} $pl={134}>
              <Field label="Pump Lock" value="8" w={49} indicator />
              <Field label="Up Lock" value="3" w={49} indicator />
              <Field label="Down Lock" value="4" w={49} indicator />
            </Row>
          </Panel>

          {/* SWEEP SETTINGS */}
          <SectionTitle $tuck>Sweep Settings</SectionTitle>
          <Panel $h={106} $pad="0 0 0 22px">
            <Col $w={120} $gap={8} $pt={10}>
              <Field label="Low Frequency (kHz)" value="75" w={95} />
              <Field label="High Frequency (kHz)" value="85" w={95} />
            </Col>
            <Col $w={83}>
              <Field label="RF Power (Vrms)" value="1.5" w={59} h={21} line={12} />
              <Field label="Sweep Time (s)" value="2.5" w={59} h={21} line={12} />
              <Field label="Sit Time (s)" value="0" w={59} h={21} line={12} />
            </Col>
            <Col $w={97} $gap={12} $pt={9}>
              <Ring label="Odd Sweep Style" value="Low to High" w={96} />
              <Ring label="Even Sweep Style" value="High to Low" w={96} />
            </Col>
          </Panel>

          {/* LOCK-IN SETTINGS */}
          {lockIns.map((s) => (
            <LockIn key={s.title} s={s} />
          ))}

          {/* BACKGROUND */}
          <SectionTitle>Background Subtraction</SectionTitle>
          <Panel $h={46} $pad="3px 0 0 18px">
            <EnableCol>
              <Text htmlFor="enable">Enable</Text>
              <Led id="enable" />
            </EnableCol>
            <Row $gap={25}>
              <Field label="Peak (G)" value="81" w={59} />
              <Field label="Window (G)" value="4" w={59} />
              <Field label="Fit Order" value="3" w={48} />
            </Row>
          </Panel>

          {/* STATUS */}
          <StatusRow>
            <StatusLabel htmlFor="status">Status</StatusLabel>
            <StatusBox id="status" readOnly defaultValue="Sweeps Completed" />
            <StatusLight />
          </StatusRow>

          <CountRow>
            <Field label="Sweep Number" value="1" w={70} h={28} size={15} line={18} bold indicator />
            <svg width="28" height="28" viewBox="0 0 28 28">
              <path d="M4 27L15 3" stroke="#777" />
              <path d="M5 27L16 3" stroke="#ddd" />
            </svg>
            <Field label="Number of Sweeps" value="1" w={70} h={28} size={15} line={18} bold />
            <Gap $ml={50}>
              <Field label="Wait Time (min)" value="120" w={70} h={28} size={15} line={18} bold />
            </Gap>
          </CountRow>

          <ButtonRow>
            <PushButton type="button" $fg="#000" $bg="#50fa14">
              Start
            </PushButton>
            <PushButton type="button" $fg="#c8c8c8" $bg="#cda26a" $edge="#8a7a60">
              Stop
            </PushButton>
            <PushButton type="button" $fg="#fff" $bg="#fa1414" $size={20}>
              Exit
            </PushButton>
          </ButtonRow>
        </Sidebar>
      </Page>
    </>
  );
}
